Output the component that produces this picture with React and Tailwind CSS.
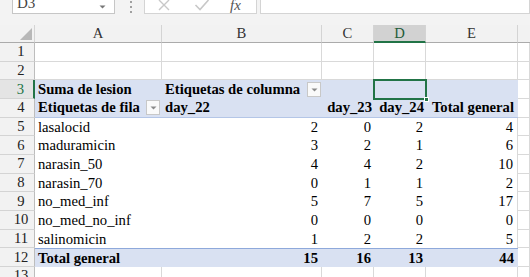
import React from "react";

const rowsBody = [
  ["lasalocid", 2, 0, 2, 4],
  ["maduramicin", 3, 2, 1, 6],
  ["narasin_50", 4, 4, 2, 10],
  ["narasin_70", 0, 1, 1, 2],
  ["no_med_inf", 5, 7, 5, 17],
  ["no_med_no_inf", 0, 0, 0, 0],
  ["salinomicin", 1, 2, 2, 5],
];

function Dropdown() {
  return (
    <div className="flex h-[15px] w-[14px] shrink-0 items-center justify-center border border-[#c8c8c8] bg-[#fafafa]">
      <svg width="7" height="4" viewBox="0 0 7 4">
        <path d="M0.5 0.5 L6.5 0.5 L3.5 3.5 Z" fill="#8a8a8a" />
      </svg>
    </div>
  );
}

function RowHead({ n, active }) {
  return (
    <div
      className={
        active
          ? "flex w-[35px] shrink-0 items-center justify-center border-r-2 border-b border-r-[#217346] border-b-[#d4d4d4] bg-[#e4e4e4] pl-[8px] text-[#217346]"
          : "flex w-[35px] shrink-0 items-center justify-center border-r border-b border-r-[#bdbdbd] border-b-[#d4d4d4] bg-[#f2f2f2] pl-[8px] text-[#222]"
      }
    >
      {n}
    </div>
  );
}

const grid = "border-r border-b border-[#d9d9d9]";

function EmptyRow({ n }) {
  return (
    <div className="flex h-[18.67px]">
      <RowHead n={n} />
      <div className={"w-[127px] shrink-0 " + grid} />
      <div className={"w-[160px] shrink-0 " + grid} />
      <div className={"w-[52px] shrink-0 " + grid} />
      <div className={"w-[52px] shrink-0 " + grid} />
      <div className={"w-[92px] shrink-0 " + grid} />
      <div className={"flex-1 " + grid} />
    </div>
  );
}

export default function App() {
  return (
    <div className="h-[277px] w-[530px] overflow-hidden whitespace-nowrap bg-white font-['Liberation_Serif','Times_New_Roman',serif] text-[14.67px] leading-none text-black">
      {/* formula bar */}
      <div className="relative h-[25px] bg-[#f3f3f3]">
        <div className="flex h-[14px] items-start">
          <div className="ml-[12px] mt-[-8px] flex h-[22px] w-[103px] items-center justify-between border border-[#c6c6c6] bg-white pl-[4px] pr-[8px] text-[#444]">
            <span className="text-[15px]">D3</span>
            <svg width="7" height="4" viewBox="0 0 7 4" className="mt-[8px]">
              <path d="M0.5 0.5 L6.5 0.5 L3.5 3.5 Z" fill="#777" />
            </svg>
          </div>
          <div className="ml-[14px] flex h-[14px] w-[4px] flex-col items-center justify-between py-[1px]">
            <span className="h-[2px] w-[2px] bg-[#a0a0a0]" />
            <span className="h-[2px] w-[2px] bg-[#a0a0a0]" />
            <span className="h-[2px] w-[2px] bg-[#a0a0a0]" />
          </div>
          <div className="ml-[11px] mt-[-8px] flex h-[22px] w-[113px] items-center border border-[#d4d4d4] bg-white">
            <svg width="14" height="14" viewBox="0 0 14 14" className="ml-[12px] mt-[4px]">
              <path d="M2 2 L12 12 M12 2 L2 12" stroke="#c8c8c8" strokeWidth="1.4" fill="none" />
            </svg>
            <svg width="16" height="14" viewBox="0 0 16 14" className="ml-[23px] mt-[4px]">
              <path d="M1.5 7 L6 11.5 L14.5 2" stroke="#c8c8c8" strokeWidth="1.6" fill="none" />
            </svg>
            <span className="ml-[20px] mt-[4px] text-[15px] italic text-[#555]">fx</span>
          </div>
          <div className="ml-[3px] mt-[-8px] h-[22px] flex-1 border border-[#d4d4d4] bg-white" />
        </div>
      </div>

      {/* column header */}
      <div className="flex h-[18px] bg-[#f2f2f2] text-[#333]">
        <div className="relative w-[35px] shrink-0 border-r border-b border-r-[#d4d4d4] border-b-[#ababab]">
          <svg width="12" height="12" viewBox="0 0 12 12" className="absolute right-[2px] bottom-[2px]">
            <path d="M12 0 L12 12 L0 12 Z" fill="#b8b8b8" />
          </svg>
        </div>
        <div className="flex w-[127px] shrink-0 items-center justify-center border-r border-b border-r-[#d4d4d4] border-b-[#ababab]">A</div>
        <div className="flex w-[160px] shrink-0 items-center justify-center border-r border-b border-r-[#d4d4d4] border-b-[#ababab]">B</div>
        <div className="flex w-[52px] shrink-0 items-center justify-center border-r border-b border-r-[#d4d4d4] border-b-[#ababab]">C</div>
        <div className="flex w-[52px] shrink-0 items-center justify-center border-r border-b-2 border-r-[#d4d4d4] border-b-[#217346] bg-[#d2d2d2] text-[#1e5c38]">D</div>
        <div className="flex w-[92px] shrink-0 items-center justify-center border-r border-b border-r-[#d4d4d4] border-b-[#ababab]">E</div>
        <div className="flex-1 border-b border-b-[#ababab]" />
      </div>

      <EmptyRow n={1} />
      <EmptyRow n={2} />

      {/* row 3 */}
      <div className="flex h-[18.67px]">
        <RowHead n={3} active />
        <div className="flex w-[127px] shrink-0 items-center bg-[#d9e1f2] pl-[3px] font-bold">Suma de lesion</div>
        <div className="flex w-[160px] shrink-0 items-center justify-between bg-[#d9e1f2] pl-[3px] pr-[1px] font-bold">
          <span>Etiquetas de columna</span>
          <Dropdown />
        </div>
        <div className="w-[52px] shrink-0 bg-[#d9e1f2]" />
        <div className="relative w-[52px] shrink-0 bg-[#d9e1f2]">
          <div className="absolute inset-[-1px] border-2 border-[#217346]" />
          <div className="absolute right-[-3px] bottom-[-3px] h-[5px] w-[5px] border border-white bg-[#217346]" />
        </div>
        <div className="w-[92px] shrink-0 bg-[#d9e1f2]" />
        <div className={"flex-1 " + grid} />
      </div>

      {/* row 4 */}
      <div className="flex h-[18.67px]">
        <RowHead n={4} />
        <div className="flex w-[127px] shrink-0 items-center justify-between border-b border-[#b4c6e7] bg-[#d9e1f2] pl-[3px] pr-[2px] font-bold">
          <span>Etiquetas de fila</span>
          <Dropdown />
        </div>
        <div className="flex w-[160px] shrink-0 items-center border-b border-[#b4c6e7] bg-[#d9e1f2] pl-[3px] font-bold">day_22</div>
        <div className="flex w-[52px] shrink-0 items-center justify-end border-b border-[#b4c6e7] bg-[#d9e1f2] pr-[2px] font-bold">day_23</div>
        <div className="flex w-[52px] shrink-0 items-center justify-end border-b border-[#b4c6e7] bg-[#d9e1f2] pr-[2px] font-bold">day_24</div>
        <div className="flex w-[92px] shrink-0 items-center justify-end border-b border-[#b4c6e7] bg-[#d9e1f2] pr-[4px] font-bold">Total general</div>
        <div className={"flex-1 " + grid} />
      </div>

      {rowsBody.map((r, i) => (
        <div key={r[0]} className="flex h-[18.67px]">
          <RowHead n={i + 5} />
          <div className="flex w-[127px] shrink-0 items-center pl-[3px]">{r[0]}</div>
          <div className="flex w-[160px] shrink-0 items-center justify-end pr-[4px]">{r[1]}</div>
          <div className="flex w-[52px] shrink-0 items-center justify-end pr-[3px]">{r[2]}</div>
          <div className="flex w-[52px] shrink-0 items-center justify-end pr-[3px]">{r[3]}</div>
          <div className="flex w-[92px] shrink-0 items-center justify-end border-r border-[#d9d9d9] pr-[4px]">{r[4]}</div>
          <div className={"flex-1 " + grid} />
        </div>
      ))}

      {/* row 12 */}
      <div className="flex h-[18.67px]">
        <RowHead n={12} />
        <div className="flex w-[127px] shrink-0 items-center border-t border-[#8ea9db] bg-[#d9e1f2] pl-[3px] font-bold">Total general</div>
        <div className="flex w-[160px] shrink-0 items-center justify-end border-t border-[#8ea9db] bg-[#d9e1f2] pr-[4px] font-bold">15</div>
        <div className="flex w-[52px] shrink-0 items-center justify-end border-t border-[#8ea9db] bg-[#d9e1f2] pr-[3px] font-bold">16</div>
        <div className="flex w-[52px] shrink-0 items-center justify-end border-t border-[#8ea9db] bg-[#d9e1f2] pr-[3px] font-bold">13</div>
        <div className="flex w-[92px] shrink-0 items-center justify-end border-t border-[#8ea9db] bg-[#d9e1f2] pr-[4px] font-bold">44</div>
        <div className={"flex-1 " + grid} />
      </div>

      <EmptyRow n={13} />
    </div>
  );
}
